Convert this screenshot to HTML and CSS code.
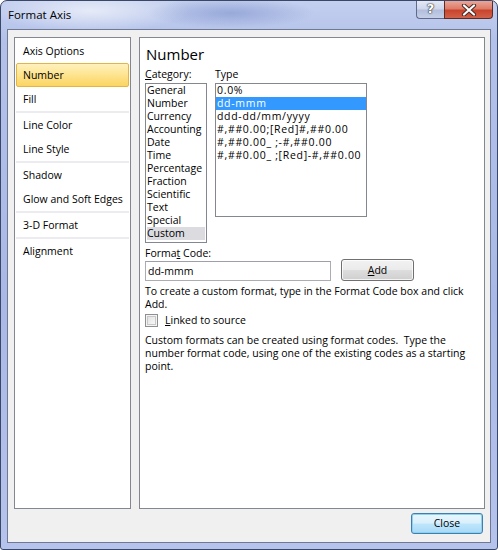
FILE: index.html
```html
<!DOCTYPE html>
<html>
<head>
<meta charset="utf-8">
<link rel="stylesheet" href="styles.css">
</head>
<body>
<div class="window">
  <div class="titlebar">
    <span class="title">Format Axis</span>
    <div class="caption-btns">
      <div class="cap-help">?</div>
      <div class="cap-close">
        <svg width="18" height="12" viewBox="0 0 18 12">
          <path d="M4 1.5 L14 10.5 M14 1.5 L4 10.5" stroke="#4a2a24" stroke-width="4.2" stroke-linecap="round"/>
          <path d="M4 1.5 L14 10.5 M14 1.5 L4 10.5" stroke="#ffffff" stroke-width="2.2" stroke-linecap="round"/>
        </svg>
      </div>
    </div>
  </div>
  <div class="client">
    <div class="panels">
      <ul class="nav">
        <li class="nav-item">Axis Options</li>
        <li class="nav-item selected">Number</li>
        <li class="nav-item">Fill</li>
        <li class="nav-sep"></li>
        <li class="nav-item">Line Color</li>
        <li class="nav-item">Line Style</li>
        <li class="nav-sep"></li>
        <li class="nav-item">Shadow</li>
        <li class="nav-item">Glow and Soft Edges</li>
        <li class="nav-sep"></li>
        <li class="nav-item">3-D Format</li>
        <li class="nav-sep"></li>
        <li class="nav-item">Alignment</li>
      </ul>
      <div class="content">
        <h1 class="heading">Number</h1>
        <div class="lists">
          <div class="col col-cat">
            <div class="label list-label"><u>C</u>ategory:</div>
            <ul class="listbox cat-box">
              <li>General</li>
              <li>Number</li>
              <li>Currency</li>
              <li>Accounting</li>
              <li>Date</li>
              <li>Time</li>
              <li>Percentage</li>
              <li>Fraction</li>
              <li>Scientific</li>
              <li>Text</li>
              <li>Special</li>
              <li class="inactive-sel">Custom</li>
            </ul>
          </div>
          <div class="col col-type">
            <div class="label list-label">Type</div>
            <ul class="listbox type-box">
              <li>0.0%</li>
              <li class="active-sel">dd-mmm</li>
              <li>ddd-dd/mm/yyyy</li>
              <li>#,##0.00;[Red]#,##0.00</li>
              <li>#,##0.00_ ;-#,##0.00</li>
              <li>#,##0.00_ ;[Red]-#,##0.00</li>
            </ul>
          </div>
        </div>
        <div class="label code-label">Forma<u>t</u> Code:</div>
        <div class="code-row">
          <div class="textbox">dd-mmm</div>
          <div class="button add-btn"><u>A</u>dd</div>
        </div>
        <p class="para para-1">To create a custom format, type in the Format Code box and click<br>Add.</p>
        <div class="check-row">
          <span class="checkbox"></span>
          <span class="check-label"><u>L</u>inked to source</span>
        </div>
        <p class="para para-2">Custom formats can be created using format codes.&nbsp; Type the<br>number format code, using one of the existing codes as a starting<br>point.</p>
      </div>
    </div>
    <div class="footer">
      <div class="button default-btn">Close</div>
    </div>
  </div>
</div>
</body>
</html>
```
FILE: styles.css
```css
html, body {
  margin: 0;
  padding: 0;
  background: #ffffff;
}

body {
  font-family: "Open Sans", "Noto Sans", sans-serif;
  font-size: 10.5px;
  color: #000;
}

.window {
  box-sizing: border-box;
  width: 498px;
  height: 550px;
  border: 1px solid #3a4766;
  border-radius: 7px 7px 3px 3px;
  padding: 0 6px 6px 6px;
  background:
    radial-gradient(ellipse 120px 22px at 230px 12px, rgba(120,140,200,0.55), rgba(120,140,200,0) 70%),
    radial-gradient(ellipse 140px 30px at 90px 10px, rgba(255,255,255,0.6), rgba(255,255,255,0) 70%),
    linear-gradient(180deg, #c4d0ef 0px, #b3c1ea 40px, #a9b8e6 300px, #b6c3ec 550px);
  display: flex;
  flex-direction: column;
}

.titlebar {
  height: 28px;
  display: flex;
  align-items: flex-start;
  flex-shrink: 0;
}

.title {
  font-size: 11.5px;
  line-height: 14px;
  margin-top: 7px;
  margin-left: 1px;
  color: #000;
}

.caption-btns {
  margin-left: auto;
  margin-right: -2px;
  display: flex;
  height: 18px;
}

.cap-help {
  box-sizing: border-box;
  width: 28px;
  height: 18px;
  border: 1px solid #5f6b8c;
  border-top: none;
  border-right: none;
  border-radius: 0 0 0 4px;
  background: linear-gradient(180deg, #e4e9f5 0%, #cfd7ec 45%, #b2bedc 55%, #c5cfe8 100%);
  color: #fff;
  font-family: "DejaVu Sans", sans-serif;
  font-weight: bold;
  font-size: 13px;
  line-height: 16px;
  text-align: center;
  text-shadow: 0 0 1px #333, 0 0 1px #333, 0 0 2px #444;
}

.cap-close {
  box-sizing: border-box;
  width: 49px;
  height: 18px;
  border: 1px solid #5b2d26;
  border-top: none;
  border-radius: 0 0 4px 0;
  background: linear-gradient(180deg, #eaa699 0%, #de7c68 45%, #c9442c 55%, #d2614a 100%);
  display: flex;
  align-items: center;
  justify-content: center;
}

.client {
  box-sizing: border-box;
  flex: 1;
  border: 1px solid #6f7a92;
  background: #f0f0f0;
  padding: 7px 5px 8px 6px;
  display: flex;
  flex-direction: column;
}

.panels {
  height: 472px;
  display: flex;
  gap: 8px;
}

.nav {
  box-sizing: border-box;
  list-style: none;
  margin: 0;
  padding: 1px 0 0 0;
  width: 117px;
  height: 100%;
  background: #fff;
  border: 1px solid #828790;
}

.nav-item {
  box-sizing: border-box;
  margin: 0 1px;
  height: 24px;
  line-height: 21px;
  padding-top: 1px;
  padding-left: 6px;
  border: 1px solid transparent;
  border-radius: 2px;
  white-space: nowrap;
}

.nav-item.selected {
  border-color: #e3b546;
  background: linear-gradient(180deg, #fef1be 0%, #fde48f 50%, #fbd462 100%);
}

.nav-sep {
  margin: 0 1px;
  height: 2px;
  background: #ececf0;
}

.content {
  box-sizing: border-box;
  flex: 1;
  height: 100%;
  background: #fff;
  border: 1px solid #828790;
  padding: 6px 5px 0 5px;
}

.heading {
  margin: 0 0 3px 1px;
  font-size: 15px;
  font-weight: normal;
  line-height: 20px;
}

.label {
  line-height: 15px;
}

.list-label {
  height: 16px;
}

.lists {
  display: flex;
  gap: 8px;
}

.col-cat {
  width: 62px;
}

.col-type {
  width: 152px;
}

.listbox {
  box-sizing: border-box;
  list-style: none;
  margin: 0;
  padding: 0;
  border: 1px solid #828790;
  overflow: hidden;
}

.listbox li {
  line-height: 13px;
  height: 13px;
  white-space: nowrap;
}

.cat-box {
  height: 160px;
}

.cat-box li {
  padding-left: 1px;
}

.cat-box li.inactive-sel {
  margin: 0 1px;
  padding-left: 0;
  background: #dcdce0;
}

.type-box {
  height: 134px;
  letter-spacing: 0.7px;
}

.type-box li {
  padding-left: 1px;
}

.type-box li.active-sel {
  background: #3399ff;
  color: #fff;
}

.code-label {
  margin-top: 3px;
  line-height: 14px;
}

.code-row {
  display: flex;
  align-items: flex-start;
  gap: 10px;
}

.textbox {
  box-sizing: border-box;
  width: 186px;
  height: 20px;
  margin-top: 1px;
  border: 1px solid #abadb3;
  border-top-color: #9da0a8;
  padding-left: 2px;
  line-height: 18px;
}

.button {
  box-sizing: border-box;
  border: 1px solid #707070;
  border-radius: 3px;
  background: linear-gradient(180deg, #f2f2f2 0%, #ebebeb 48%, #dddddd 52%, #cfcfcf 100%);
  box-shadow: inset 0 0 0 1px rgba(255,255,255,0.75);
  text-align: center;
}

.add-btn {
  width: 73px;
  height: 22px;
  margin-top: -1px;
  line-height: 20px;
}

.para {
  margin: 0;
  line-height: 13px;
}

.para-1 {
  margin-top: 4px;
}

.check-row {
  display: flex;
  align-items: center;
  height: 15px;
  margin-top: 2px;
}

.checkbox {
  box-sizing: border-box;
  width: 13px;
  height: 13px;
  border: 1px solid #8e8f8f;
  background: linear-gradient(135deg, #dcdcdc 0%, #f4f4f4 70%, #fbfbfb 100%);
  box-shadow: inset 0 0 0 1px #f4f4f4, inset 0 0 0 2px #c8c8c8;
}

.check-label {
  margin-left: 7px;
  line-height: 15px;
}

.para-2 {
  margin-top: 6px;
}

.footer {
  display: flex;
  justify-content: flex-end;
  margin-top: 4px;
  padding-right: 2px;
}

.default-btn {
  width: 72px;
  height: 21px;
  line-height: 19px;
  border-color: #3c7fb1;
  box-shadow: inset 0 0 0 1px #8fd0ef;
  background: linear-gradient(180deg, #eaf6fd 0%, #d9f0fc 48%, #bee6fd 52%, #a7d9f5 100%);
}
```
